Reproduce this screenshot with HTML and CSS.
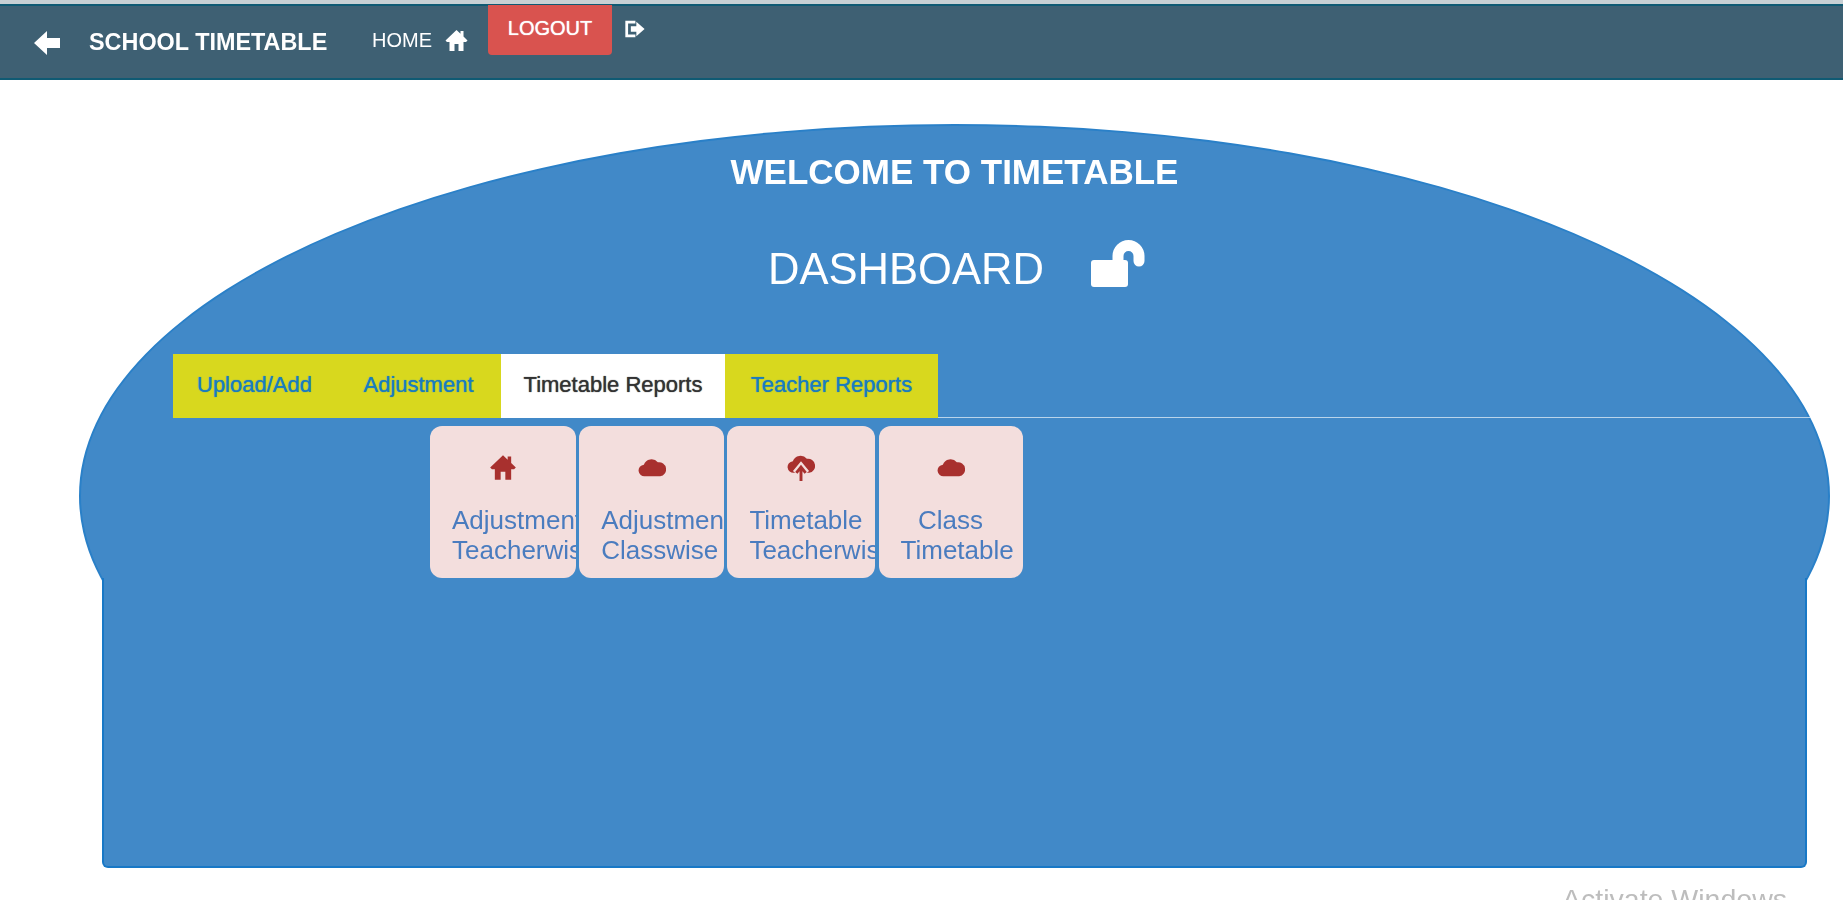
FILE: index.html
```html
<!DOCTYPE html>
<html lang="en">
<head>
<meta charset="utf-8">
<title>School Timetable</title>
<link rel="stylesheet" href="styles.css">
</head>
<body>
<div class="page">
  <header class="topbar">
    <svg class="back-icon" viewBox="0 0 28 26"><path d="M14 1 L1 13 L14 25 V18 H27 V8 H14 Z"/></svg>
    <span class="brand">SCHOOL TIMETABLE</span>
    <a class="home-link">HOME
      <svg class="home-icon" viewBox="0 0 24 24"><path d="M12 2 L1 12.5 L2.5 14 H5 V23 H10 V16 H14 V23 H19 V14 H21.5 L23 12.5 L19 8.5 V3 H16 V5.8 Z"/></svg>
    </a>
    <a class="logout-btn">LOGOUT</a>
    <svg class="logout-icon" viewBox="0 0 24 24"><path d="M2 3 H13 V6 H5 V18 H13 V21 H2 Z M8 9 H14 V4 L23 12 L14 20 V15 H8 Z"/></svg>
  </header>
  <main class="content">
    <section class="panel">
      <h1 class="welcome">WELCOME TO TIMETABLE</h1>
      <h2 class="dash">DASHBOARD
        <svg class="unlock-icon" viewBox="0 0 55 47"><rect x="0" y="20" width="37" height="27" rx="3"/><path class="shackle" d="M27 22 V16 A10.5 10.5 0 0 1 48 16 V21"/></svg>
      </h2>
      <nav class="tabs">
        <a class="tab tab-upload">Upload/Add</a>
        <a class="tab tab-adjust">Adjustment</a>
        <a class="tab tab-active">Timetable Reports</a>
        <a class="tab tab-teacher">Teacher Reports</a>
      </nav>
      <div class="cards">
        <a class="card">
          <svg class="card-icon" viewBox="0 0 24 24"><path d="M12 2 L1 12.5 L2.5 14 H5 V23 H10 V16 H14 V23 H19 V14 H21.5 L23 12.5 L19 8.5 V3 H16 V5.8 Z"/></svg>
          <span>Adjustment Teacherwise</span>
        </a>
        <a class="card">
          <svg class="card-icon" viewBox="0 0 24 24"><path d="M19 20 H6 A5 5 0 0 1 5 10 A7 7 0 0 1 17 8 A6 6 0 0 1 19 20 Z"/></svg>
          <span>Adjustment Classwise</span>
        </a>
        <a class="card">
          <svg class="card-icon" viewBox="0 0 24 24"><path d="M19 17 H6 A5 5 0 0 1 5 7 A7 7 0 0 1 17 5 A6 6 0 0 1 19 17 Z"/><path class="arrow-gap" d="M12 25 V12 M7 17 L12 11 L17 17"/><path class="arrow-line" d="M12 26 V13 M8 17 L12 12 L16 17"/></svg>
          <span>Timetable Teacherwise</span>
        </a>
        <a class="card">
          <svg class="card-icon" viewBox="0 0 24 24"><path d="M19 20 H6 A5 5 0 0 1 5 10 A7 7 0 0 1 17 8 A6 6 0 0 1 19 20 Z"/></svg>
          <span>Class Timetable</span>
        </a>
      </div>
    </section>
    <p class="activate">Activate Windows</p>
  </main>
</div>
</body>
</html>
```
FILE: styles.css
```css
* { box-sizing: border-box; }
html, body { margin: 0; height: 900px; overflow: hidden; background: #fff; }
body { font-family: "Liberation Sans", Arial, sans-serif; }
.page { border-top: 4px solid #c8d0d4; height: 900px; overflow: hidden; }

.topbar {
  height: 76px;
  background: #3e6073;
  border-top: 2px solid #0f5a73;
  border-bottom: 2px solid #0f5a73;
  display: flex;
  align-items: flex-start;
  color: #fff;
}
.back-icon { width: 28px; height: 26px; fill: #fff; margin: 24px 0 0 33px; flex: none; filter: blur(.4px); }
.brand { font-size: 23.4px; font-weight: 700; margin: 23px 0 0 28px; width: 243px; white-space: nowrap; filter: blur(.7px); }
.home-link { display: flex; align-items: center; font-size: 20px; font-weight: 400; margin: 22px 0 0 40px; width: 116px; gap: 12px; filter: blur(.5px); }
.home-icon { width: 25px; height: 24px; fill: #fff; }
.logout-btn {
  width: 124px; height: 50px; margin-top: -1px;
  background: #d9534f; border-radius: 0 0 4px 4px;
  font-size: 20px; text-align: center; line-height: 46px; color: #fff;
  text-shadow: 0 0 1px #fff;
}
.logout-icon { width: 23px; height: 22px; fill: #fff; margin: 12px 0 0 11px; filter: blur(.4px); }

.content { padding: 44px 36px 0 102px; }
.panel {
  position: relative;
  isolation: isolate;
  height: 744px;
  padding: 30px 0 0 71px;
  color: #fff;
}
.panel::before {
  content: "";
  position: absolute;
  z-index: -2;
  left: -23px; right: -23px; top: 0; height: 740px;
  border-radius: 50%;
  background: #4189c8;
  border: 2px solid #2a80c8;
}
.panel::after {
  content: "";
  position: absolute;
  z-index: -1;
  left: 0; right: 0; top: 454px; bottom: 0;
  background: #4189c8;
  border: 2px solid #1878c6;
  border-top: 0;
  border-radius: 0 0 6px 6px;
}

.welcome { margin: 0 71px 0 0; height: 36px; line-height: 36px; font-size: 35px; font-weight: 700; text-align: center; filter: blur(.6px); }
.dash {
  margin: 54px 71px 0 0;
  padding-left: 5px;
  height: 50px;
  display: flex; justify-content: center; align-items: center; gap: 47px;
  font-size: 43.6px; font-weight: 400; filter: blur(.6px);
}
.unlock-icon { width: 55px; height: 47px; fill: #fff; margin-top: -11px; }
.shackle { fill: none; stroke: #fff; stroke-width: 11; stroke-linecap: round; }

.tabs {
  margin: 60px -3px 0 0;
  height: 64px;
  display: flex;
  border-bottom: 1px solid #b9d4ea;
}
.tab {
  background: #d8d81e;
  color: #1a7cbe;
  font-size: 22px;
  height: 64px;
  line-height: 62px;
  text-align: center;
  white-space: nowrap;
  text-shadow: 0 0 1px currentColor;
}
.tab-upload { width: 163px; }
.tab-adjust { width: 165px; }
.tab-active { width: 224px; background: #fff; color: #333; }
.tab-teacher { width: 213px; }

.cards {
  margin: 8px 0 0 257px;
  display: grid;
  grid-template-columns: 146px 145px 148px 144px;
  column-gap: 3.2px;
}
.card {
  height: 152px;
  background: #f3dedd;
  border-radius: 12px;
  padding: 27px 22px 0;
  overflow: hidden;
  color: #4a7cbf;
  font-size: 26px;
  line-height: 30px;
  text-align: center;
  display: block;
}
.card span { display: block; filter: blur(.5px); }
.card-icon { display: block; width: 28px; height: 28px; margin: 0 auto 24px; fill: #a8302e; filter: blur(.4px); }
.arrow-gap { fill: none; stroke: #f3dedd; stroke-width: 5; }
.arrow-line { fill: none; stroke: #a8302e; stroke-width: 2.5; }

.activate {
  margin: 15px 20px 0 0;
  text-align: right;
  font-size: 28.5px;
  color: #bdbdbd;
  white-space: nowrap;
  filter: blur(.6px);
}
```
